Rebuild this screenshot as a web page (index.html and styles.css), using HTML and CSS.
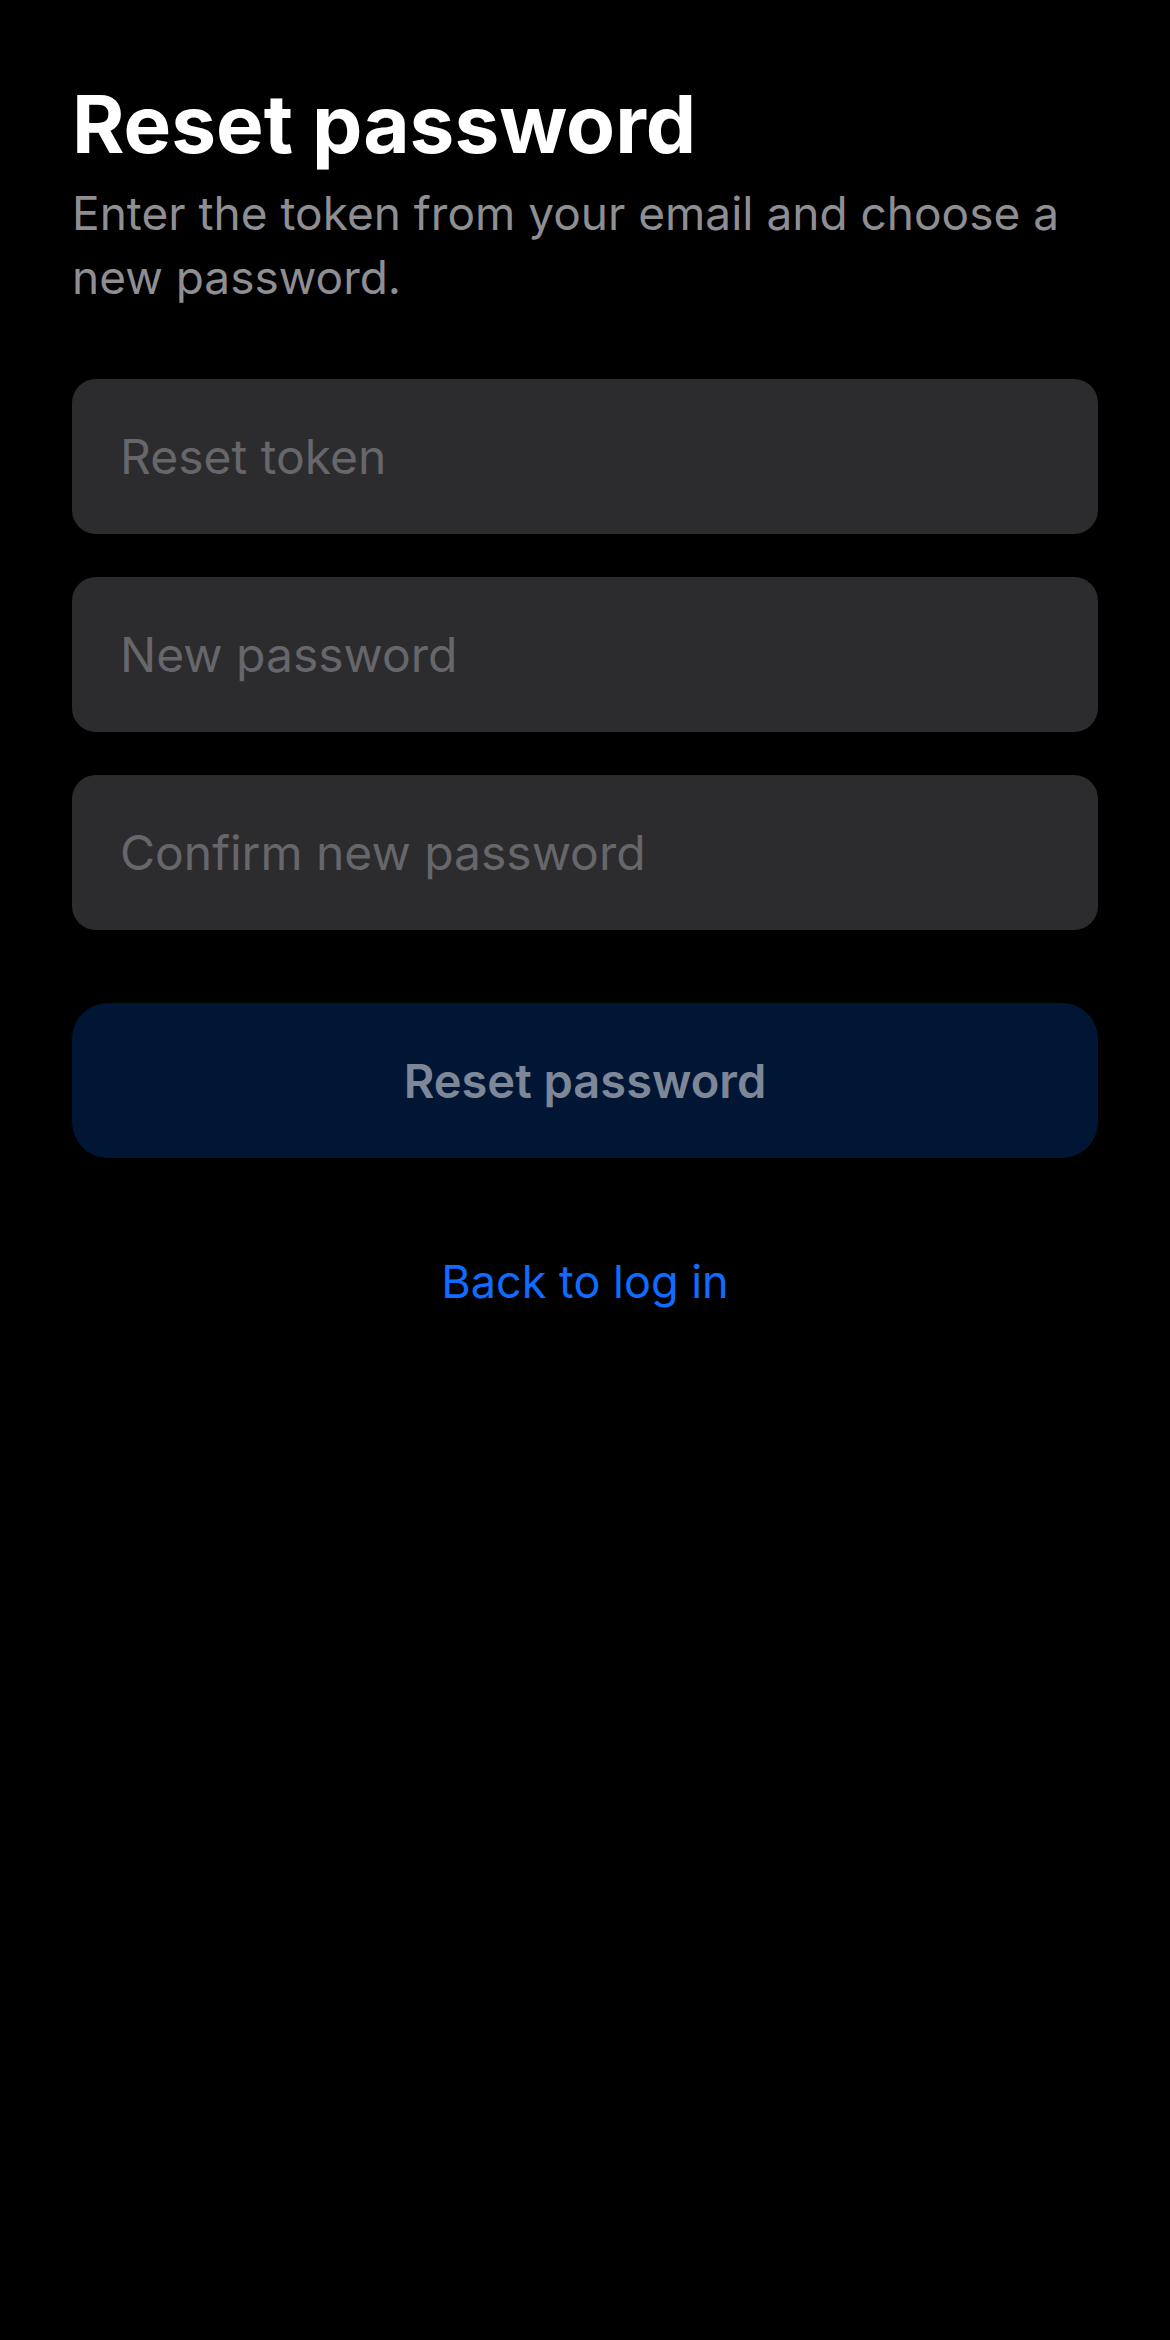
FILE: index.html
```html
<!DOCTYPE html>
<html lang="en">
<head>
<meta charset="utf-8">
<title>Reset password</title>
<link rel="stylesheet" href="styles.css">
</head>
<body>
<main class="screen">
  <h1 class="title">Reset password</h1>
  <p class="subtitle">Enter the token from your email and choose a new password.</p>
  <form class="form">
    <div class="fields">
      <input class="field" type="text" placeholder="Reset token">
      <input class="field" type="password" placeholder="New password">
      <input class="field" type="password" placeholder="Confirm new password">
    </div>
    <button class="submit" type="button">Reset password</button>
  </form>
  <a class="back" href="#">Back to log in</a>
</main>
</body>
</html>
```

FILE: styles.css
```css
html, body {
  margin: 0;
  padding: 0;
  background: #000;
}
body {
  font-family: Inter, "Noto Sans", "Liberation Sans", sans-serif;
  color: #fff;
}
.screen {
  box-sizing: border-box;
  min-height: 2340px;
  padding: 78px 72px 0;
  display: flex;
  flex-direction: column;
}
.title {
  margin: 0;
  font-size: 80px;
  line-height: 91px;
  font-weight: 700;
  letter-spacing: 0;
  color: #fff;
}
.subtitle {
  margin: 12px 0 0;
  font-size: 46px;
  line-height: 64px;
  font-weight: 400;
  color: #8e8e93;
}
.form {
  margin-top: 70px;
  display: flex;
  flex-direction: column;
  gap: 73px;
}
.fields {
  display: flex;
  flex-direction: column;
  gap: 43px;
}
.field {
  box-sizing: border-box;
  display: block;
  width: 100%;
  height: 155px;
  margin: 0;
  padding: 0 48px;
  border: none;
  border-radius: 24px;
  background: #2c2c2e;
  font-family: inherit;
  font-size: 48px;
  color: #fff;
  outline: none;
}
.field::placeholder {
  color: #66666b;
  opacity: 1;
}
.submit {
  box-sizing: border-box;
  display: block;
  width: 100%;
  height: 155px;
  margin: 0;
  border: none;
  border-radius: 36px;
  background: #011634;
  font-family: inherit;
  font-size: 47px;
  font-weight: 600;
  color: #7e8797;
}
.back {
  align-self: center;
  margin-top: 94px;
  font-size: 45px;
  line-height: 60px;
  color: #0f6cff;
  text-decoration: none;
}
```
